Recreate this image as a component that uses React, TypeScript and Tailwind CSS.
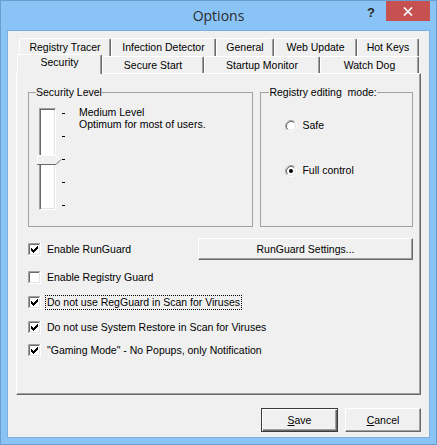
const sans = "font-['Liberation_Sans',Arial,sans-serif]"

function CheckBox({ checked }: { checked: boolean }) {
    return (
        <svg width="13" height="13" viewBox="0 0 13 13" className="shrink-0">
            <rect x="0" y="0" width="13" height="13" fill="#ffffff" />
            <path d="M0.5 12.5V0.5H12.5" stroke="#a0a0a0" fill="none" />
            <path d="M1.5 11.5V1.5H11.5" stroke="#696969" fill="none" />
            <path d="M0 12.5H12.5V0" stroke="#ffffff" fill="none" />
            <path d="M1 11.5H11.5V1" stroke="#e3e3e3" fill="none" />
            {checked && (
                <path
                    d="M3 5h1v3H3z M4 6h1v3H4z M5 7h1v3H5z M6 6h1v3H6z M7 5h1v3H7z M8 4h1v3H8z M9 3h1v3H9z"
                    fill="#000000"
                />
            )}
        </svg>
    )
}

function Radio({ checked }: { checked: boolean }) {
    return (
        <svg width="12" height="12" viewBox="0 0 12 12" className="shrink-0">
            <circle cx="6" cy="6" r="5" fill="#ffffff" />
            <path d="M2.11 9.89A5.5 5.5 0 0 1 9.89 2.11" stroke="#a0a0a0" fill="none" />
            <path d="M2.82 9.18A4.5 4.5 0 0 1 9.18 2.82" stroke="#696969" fill="none" />
            <path d="M9.89 2.11A5.5 5.5 0 0 1 2.11 9.89" stroke="#ffffff" fill="none" />
            <path d="M9.18 2.82A4.5 4.5 0 0 1 2.82 9.18" stroke="#e3e3e3" fill="none" />
            {checked && <circle cx="6" cy="6" r="2" fill="#000000" />}
        </svg>
    )
}

const backTab = "h-[18px] flex items-center justify-center bg-[#f0f0f0] border-l border-t border-r border-l-white border-t-white border-r-[#696969] shadow-[inset_-1px_0_0_#a0a0a0] rounded-t-[2px]"
const frontTab = "h-[17px] mb-[1px] flex items-center justify-center bg-[#f0f0f0] border-l border-t border-r border-l-white border-t-white border-r-[#696969] shadow-[inset_-1px_0_0_#a0a0a0] rounded-t-[2px]"
const raised = "flex items-center justify-center bg-[#f0f0f0] border border-t-white border-l-white border-r-[#696969] border-b-[#696969] shadow-[inset_-1px_-1px_0_#a0a0a0]"

function App() {
    return (
        <div className={`w-[437px] h-[445px] flex flex-col bg-[#8ac4f6] border border-[#6c9dd1] text-black text-[10.5px] leading-[13px] ${sans}`}>
            {/* title bar */}
            <div className="h-[29px] grid grid-cols-[1fr_auto_1fr]">
                <div />
                <div className="flex items-center text-[14px] text-[#2b2b2b] font-['Open_Sans','Noto_Sans',sans-serif]">Options</div>
                <div className="flex justify-end items-start">
                    <span className="mt-[5px] mr-[11px] text-[13px] leading-[13px] font-bold text-[#262626] font-['Liberation_Sans',Arial,sans-serif]">?</span>
                    <div className="w-[44px] h-[20px] mr-[6px] bg-[#c75050] flex items-center justify-center">
                        <svg width="10" height="9" viewBox="0 0 10 9">
                            <path d="M1 0.5L9 8.5M9 0.5L1 8.5" stroke="#ffffff" strokeWidth="1.7" />
                        </svg>
                    </div>
                </div>
            </div>

            {/* client */}
            <div className="mx-[6px] mb-[6px] flex-1 border border-[#7cafe2] bg-[#f0f0f0] px-[8px] pt-[7px] flex flex-col">
                <div className="flex ml-[3px]">
                    <div className={`${backTab} w-[92px]`}>Registry Tracer</div>
                    <div className={`${backTab} w-[105px]`}>Infection Detector</div>
                    <div className={`${backTab} w-[58px]`}>General</div>
                    <div className={`${backTab} w-[83px]`}>Web Update</div>
                    <div className={`${backTab} w-[62px]`}>Hot Keys</div>
                </div>
                <div className="flex items-end h-[20px] -mt-[2px] -mb-[1px] ml-[1px] relative z-10">
                    <div className="w-[85px] h-[20px] flex justify-center pt-[1px] bg-[#f0f0f0] border-l border-t border-r border-l-white border-t-white border-r-[#696969] shadow-[inset_-1px_0_0_#a0a0a0] rounded-t-[2px]">Security</div>
                    <div className={`${frontTab} w-[102px]`}>Secure Start</div>
                    <div className={`${frontTab} w-[116px]`}>Startup Monitor</div>
                    <div className={`${frontTab} w-[99px]`}>Watch Dog</div>
                </div>

                {/* tab panel */}
                <div className="h-[322px] border border-l-white border-t-white border-r-[#696969] border-b-[#696969] shadow-[inset_-1px_-1px_0_#a0a0a0] pl-[11px] pr-[7px] pt-[12px] flex flex-col">
                    <div className="flex gap-[7px]">
                        <fieldset className="w-[226px] h-[141px] border border-[#a0a0a0]">
                            <legend className="ml-[7px]">Security Level</legend>
                            <div className="flex pl-[10px] pt-[9px]">
                                <div className="relative w-[17px] h-[102px] bg-white border border-l-[#a0a0a0] border-t-[#a0a0a0] border-r-white border-b-white shadow-[inset_1px_1px_0_#696969,inset_-1px_-1px_0_#e3e3e3]">
                                    <svg width="25" height="10" viewBox="0 0 25 10" className="absolute left-[-3px] top-[46px]">
                                        <path d="M0 0H19L24 5L19 10H0Z" fill="#f0f0f0" />
                                        <path d="M0.5 9.5V0.5H19L23.5 5" stroke="#ffffff" fill="none" />
                                        <path d="M0 9.5H19L24 4.5" stroke="#696969" fill="none" />
                                    </svg>
                                </div>
                                <div className="ml-[6px] pt-[5px] flex flex-col gap-[22px]">
                                    <div className="w-[3px] h-[1px] bg-black" />
                                    <div className="w-[3px] h-[1px] bg-black" />
                                    <div className="w-[3px] h-[1px] bg-black" />
                                    <div className="w-[3px] h-[1px] bg-black" />
                                    <div className="w-[3px] h-[1px] bg-black" />
                                </div>
                                <div className="ml-[14px] -mt-[2px] flex flex-col leading-[12px]">
                                    <span>Medium Level</span>
                                    <span>Optimum for most of users.</span>
                                </div>
                            </div>
                        </fieldset>
                        <fieldset className="w-[153px] h-[141px] border border-[#a0a0a0]">
                            <legend className="ml-[8px] whitespace-pre">Registry editing  mode:</legend>
                            <div className="flex flex-col pl-[24px] pt-[20px] gap-[32px]">
                                <label className="flex items-center gap-[5px] h-[13px]">
                                    <Radio checked={false} />
                                    <span>Safe</span>
                                </label>
                                <label className="flex items-center gap-[5px] h-[13px]">
                                    <Radio checked={true} />
                                    <span>Full control</span>
                                </label>
                            </div>
                        </fieldset>
                    </div>

                    <div className="flex items-center h-[22px] mt-[11px]">
                        <CheckBox checked={true} />
                        <span className="ml-[6px]">Enable RunGuard</span>
                        <div className={`${raised} ml-auto w-[215px] h-[22px]`}>RunGuard Settings...</div>
                    </div>
                    <div className="flex items-center h-[20px] mt-[7px]">
                        <CheckBox checked={false} />
                        <span className="ml-[6px]">Enable Registry Guard</span>
                    </div>
                    <div className="flex items-center h-[20px] mt-[5px]">
                        <CheckBox checked={true} />
                        <span className="ml-[4px] px-[1px] border border-dotted border-black">Do not use RegGuard in Scan for Viruses</span>
                    </div>
                    <div className="flex items-center h-[20px] mt-[5px]">
                        <CheckBox checked={true} />
                        <span className="ml-[6px]">Do not use System Restore in Scan for Viruses</span>
                    </div>
                    <div className="flex items-center h-[20px] mt-[3px]">
                        <CheckBox checked={true} />
                        <span className="ml-[6px]">"Gaming Mode" - No Popups, only Notification</span>
                    </div>
                </div>

                {/* dialog buttons */}
                <div className="flex justify-end gap-[7px] mt-[13px] pr-[-1px]">
                    <div className="w-[77px] h-[24px] flex items-center justify-center bg-[#f0f0f0] border border-[#3c3c3c] shadow-[inset_1px_1px_0_#ffffff,inset_-1px_-1px_0_#696969,inset_-2px_-2px_0_#a0a0a0]">
                        <span><u>S</u>ave</span>
                    </div>
                    <div className={`${raised} w-[76px] h-[24px]`}>
                        <span><u>C</u>ancel</span>
                    </div>
                </div>
            </div>
        </div>
    )
}

export default App
